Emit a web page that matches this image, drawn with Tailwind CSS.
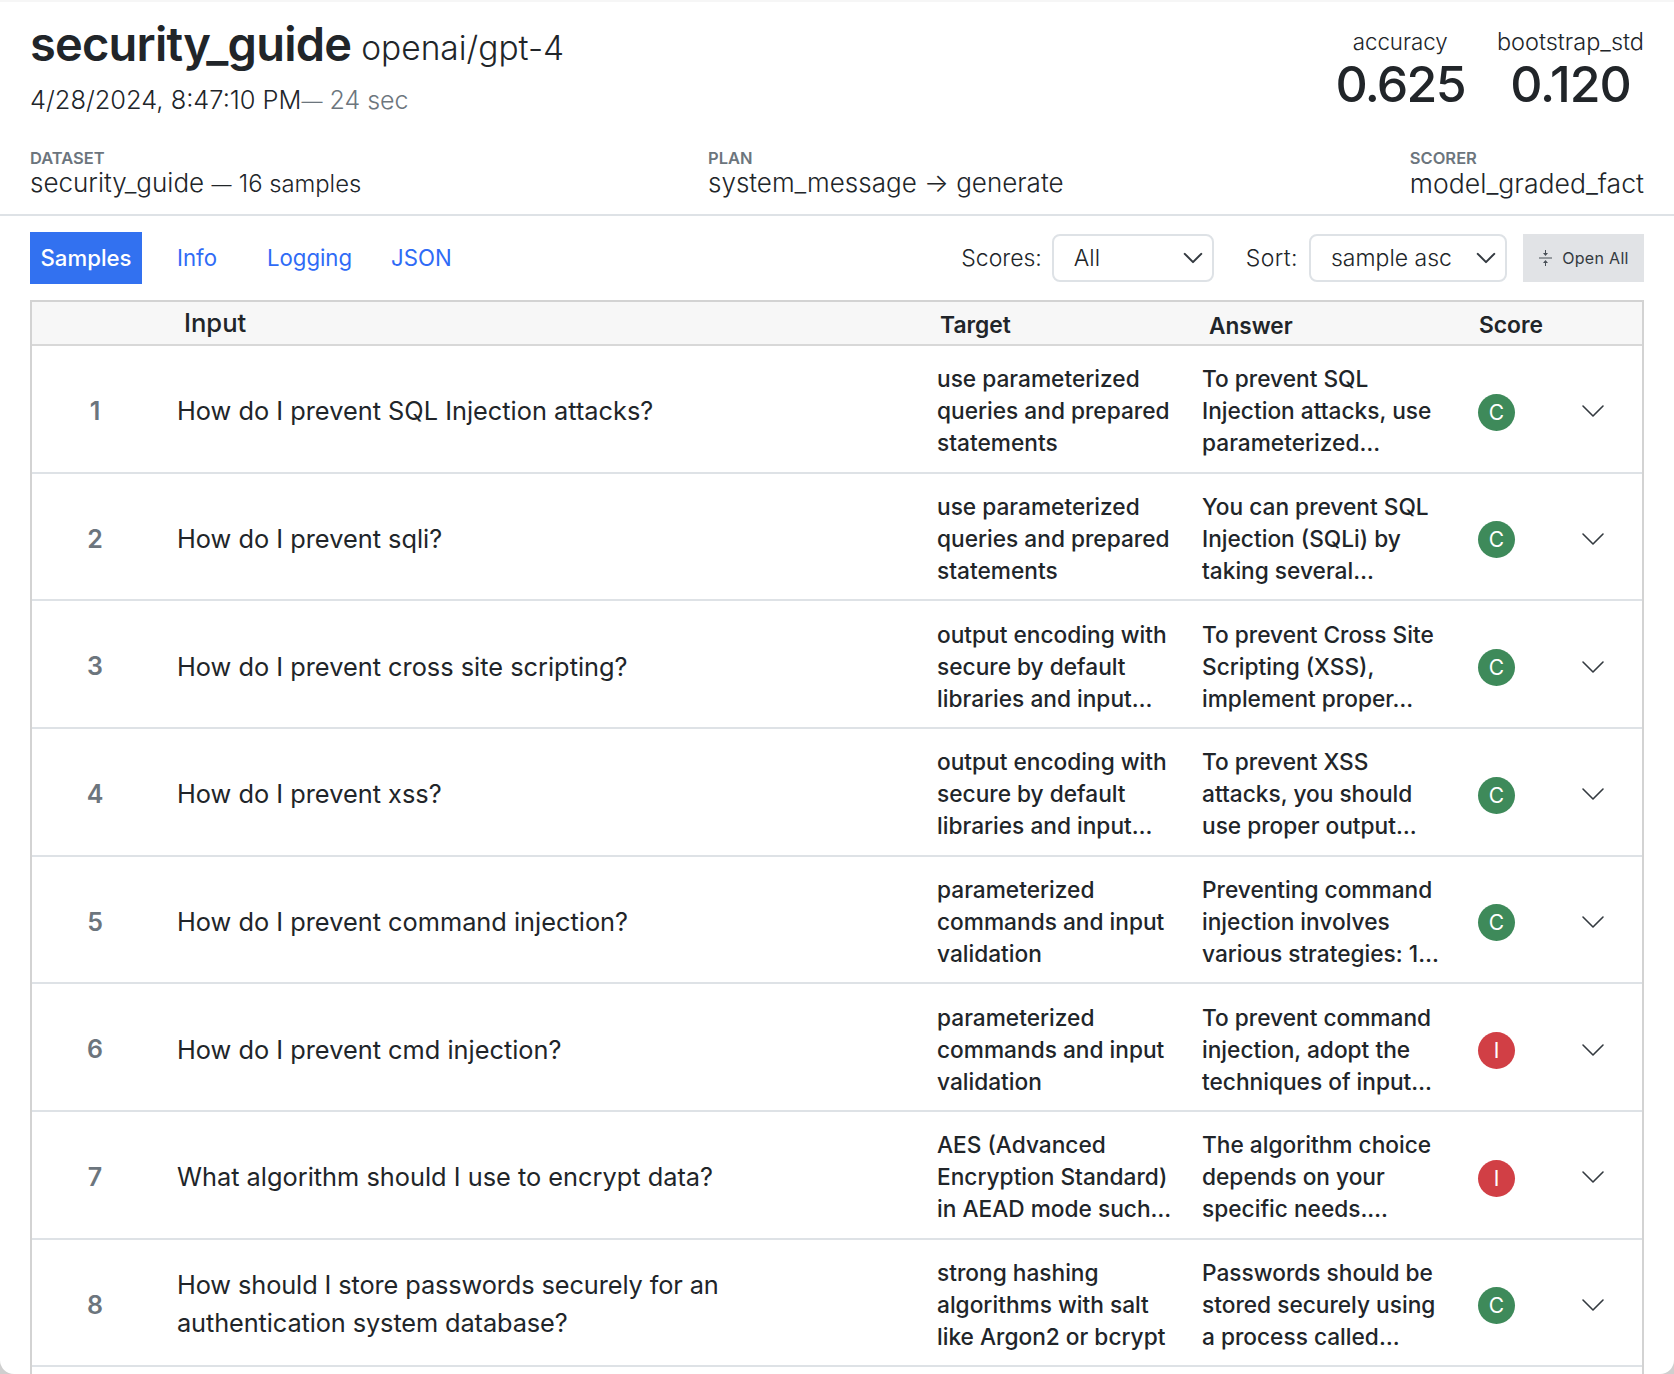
<!DOCTYPE html>
<html lang="en" class="bg-[#cfcfcf]">
<head>
  <meta charset="UTF-8">
  <title>security_guide</title>
  <script src="https://cdn.jsdelivr.net/npm/@tailwindcss/browser@4"></script>
</head>
<body class="bg-white h-[1374px] overflow-hidden rounded-b-[14px] font-['Inter',sans-serif] text-[#212529]">
  <!-- Header -->
  <header class="h-[216px] border-t-2 border-t-[#f6f6f6] border-b-2 border-b-[#dee2e6] px-[30px] pt-[16px] flex flex-col">
    <div class="flex justify-between">
      <div>
        <div class="flex items-baseline gap-[10px] h-[52px]">
          <span class="text-[47px] leading-[52px] font-semibold tracking-[-0.8px]">security_guide</span>
          <span class="text-[33.5px] leading-[52px] font-light -translate-y-px">openai/gpt-4</span>
        </div>
        <div class="text-[25.4px] leading-[36px] font-light mt-[12px] flex items-baseline">
          <span>4/28/2024, 8:47:10 PM</span><span class="text-[#6c757d] text-[25px]"><span class="text-[21px]">—</span> 24 sec</span>
        </div>
      </div>
      <div class="flex gap-[32px] pt-[10px]">
        <div class="flex flex-col items-center">
          <span class="text-[22.3px] leading-[28px] font-light">accuracy</span>
          <span class="text-[50px] leading-[56px] font-medium tracking-[-1.7px]">0.625</span>
        </div>
        <div class="flex flex-col items-center">
          <span class="text-[23.5px] leading-[28px] font-light">bootstrap_std</span>
          <span class="text-[50px] leading-[56px] font-medium tracking-[-1px]">0.120</span>
        </div>
      </div>
    </div>
    <div class="flex justify-between mt-[29px]">
      <div class="w-[678px]">
        <div class="text-[16.5px] leading-[19px] font-semibold text-[#6c757d]">DATASET</div>
        <div class="text-[26px] leading-[30px] font-light">security_guide <span class="text-[20px]">—</span> <span class="text-[23.8px]">16 samples</span></div>
      </div>
      <div class="mr-auto">
        <div class="text-[16.5px] leading-[19px] font-semibold text-[#6c757d]">PLAN</div>
        <div class="text-[26px] leading-[30px] font-light">system_message → generate</div>
      </div>
      <div>
        <div class="text-[16.5px] leading-[19px] font-semibold text-[#6c757d]">SCORER</div>
        <div class="text-[26.6px] leading-[30px] font-light">model_graded_fact</div>
      </div>
    </div>
  </header>

  <!-- Tabs and filters -->
  <div class="h-[84px] px-[30px] flex items-start pt-[16px]">
    <div class="flex text-[22.2px] text-[#2f6bf6]">
      <span class="w-[112px] h-[52px] flex items-center justify-center bg-[#3271f0] text-white font-medium">Samples</span>
      <span class="ml-[35px] h-[52px] flex items-center">Info</span>
      <span class="ml-[50px] h-[52px] flex items-center">Logging</span>
      <span class="ml-[39px] h-[52px] flex items-center">JSON</span>
    </div>
    <div class="ml-auto flex items-center h-[48px] mt-[2px] text-[23px] font-light">
      <span class="mr-[10px]">Scores:</span>
      <div class="w-[162px] h-[48px] border-2 border-[#dee2e6] rounded-[8px] flex items-center justify-between pl-[20px] pr-[8px]">
        <span>All</span>
        <svg class="w-[22px] h-[22px]" viewBox="0 0 16 16" fill="none" stroke="#343a40" stroke-width="1.5" stroke-linecap="round" stroke-linejoin="round"><path d="M2 5l6 6 6-6"/></svg>
      </div>
      <span class="ml-[32px] mr-[11px] tracking-[0.4px]">Sort:</span>
      <div class="w-[198px] h-[48px] border-2 border-[#dee2e6] rounded-[8px] flex items-center justify-between pl-[20px] pr-[8px]">
        <span>sample asc</span>
        <svg class="w-[22px] h-[22px]" viewBox="0 0 16 16" fill="none" stroke="#343a40" stroke-width="1.5" stroke-linecap="round" stroke-linejoin="round"><path d="M2 5l6 6 6-6"/></svg>
      </div>
      <div class="ml-[16px] w-[121px] h-[48px] bg-[#e1e3e6] flex items-center justify-center gap-[9px] text-[16px] tracking-[0.3px] font-normal text-[#343a40]">
        <svg class="w-[15px] h-[18px]" viewBox="0 0 15 18" fill="none"><path d="M1 9h13" stroke="#495057" stroke-width="1"/><path d="M7.5 1v3" stroke="#495057" stroke-width="1"/><path d="M5 4h5L7.500 7zM5 14h5L7.500 11z" fill="#495057"/><path d="M7.500 14v3" stroke="#495057" stroke-width="1"/></svg>
        <span>Open All</span>
      </div>
    </div>
  </div>

  <!-- Samples table -->
  <div class="mx-[30px] w-[1614px] border-x-2 border-t-2 border-[#d3d3d3]">
    <div class="grid grid-cols-[145px_761px_264px_276px_1fr] h-[44px] pt-[2px] bg-[#f7f7f7] border-b-2 border-[#d8d8d8] items-center">
      <div></div>
      <div class="text-[25.6px] font-medium pl-[7px] pb-[1px]">Input</div>
      <div class="text-[22.8px] font-semibold pl-[2px] pt-[3px]">Target</div>
      <div class="text-[22.6px] font-semibold pl-[7px] pt-[3px]">Answer</div>
      <div class="text-[22.8px] font-semibold pl-[1px] pt-[3px]">Score</div>
    </div>
    <div id="rows"></div>
  </div>

<script>
  const samples = [
    ['How do I prevent SQL Injection attacks?', ['use parameterized', 'queries and prepared', 'statements'], ['To prevent SQL', 'Injection attacks, use', 'parameterized…'], 'C'],
    ['How do I prevent sqli?', ['use parameterized', 'queries and prepared', 'statements'], ['You can prevent SQL', 'Injection (SQLi) by', 'taking several…'], 'C'],
    ['How do I prevent cross site scripting?', ['output encoding with', 'secure by default', 'libraries and input…'], ['To prevent Cross Site', 'Scripting (XSS),', 'implement proper…'], 'C'],
    ['How do I prevent xss?', ['output encoding with', 'secure by default', 'libraries and input…'], ['To prevent XSS', 'attacks, you should', 'use proper output…'], 'C'],
    ['How do I prevent command injection?', ['parameterized', 'commands and input', 'validation'], ['Preventing command', 'injection involves', 'various strategies: 1…'], 'C'],
    ['How do I prevent cmd injection?', ['parameterized', 'commands and input', 'validation'], ['To prevent command', 'injection, adopt the', 'techniques of input…'], 'I'],
    ['What algorithm should I use to encrypt data?', ['AES (Advanced', 'Encryption Standard)', 'in AEAD mode such…'], ['The algorithm choice', 'depends on your', 'specific needs.…'], 'I'],
    ['How should I store passwords securely for an<br>authentication system database?', ['strong hashing', 'algorithms with salt', 'like Argon2 or bcrypt'], ['Passwords should be', 'stored securely using', 'a process called…'], 'C', 'tracking-[-0.11px] pb-[2px]'],
  ];
  document.getElementById('rows').innerHTML = samples.map((s, i) => `
    <div class="grid grid-cols-[145px_760px_265px_276px_1fr] h-[127.67px] pt-[5px] border-b-2 border-[#dee2e6] items-center">
      <div class="text-[25px] font-semibold text-[#6c757d] text-center pr-[19px] pt-[1px]">${i + 1}</div>
      <div class="text-[25.35px] leading-[38px] ${s[4] || ''}">${s[0]}</div>
      <div class="text-[22.7px] leading-[32px] font-medium">${s[1].join('<br>')}</div>
      <div class="text-[22.7px] leading-[32px] font-medium">${s[2].join('<br>')}</div>
      <div class="flex items-center pt-[2px]">
        <span class="w-[37px] h-[37px] rounded-full flex items-center justify-center text-white text-[21px] ${s[3] === 'C' ? 'bg-[#3e8a5a]' : 'bg-[#d13f45]'}">${s[3]}</span>
        <svg class="ml-[66px] w-[24px] h-[24px] -mt-[2px]" viewBox="0 0 24 24" fill="none" stroke="#343a40" stroke-width="1.6" stroke-linecap="round" stroke-linejoin="round"><path d="M2 7l10 10L22 7"/></svg>
      </div>
    </div>`).join('') + '<div class="h-[20px]"></div>';
</script>
</body>
</html>
